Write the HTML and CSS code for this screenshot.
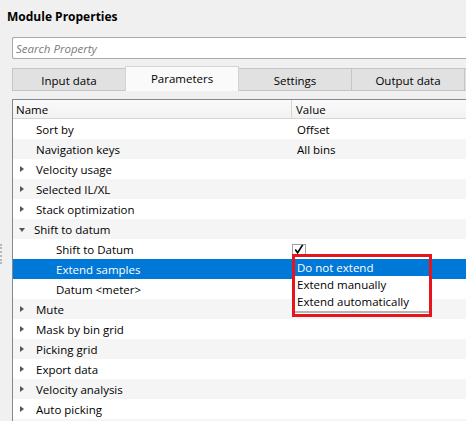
FILE: index.html
```html
<!DOCTYPE html>
<html>
<head>
<meta charset="utf-8">
<link rel="stylesheet" href="styles.css">
</head>
<body>
<div class="title">Module Properties</div>
<div class="search"><span class="placeholder">Search Property</span></div>
<div class="tabs">
  <div class="tab">Input data</div>
  <div class="tab active">Parameters</div>
  <div class="tab">Settings</div>
  <div class="tab">Output data</div>
  <div class="tab"></div>
</div>
<div class="main">
  <div class="gutter"><div class="grip"></div></div>
  <div class="table">
    <div class="head">
      <div class="hcell">Name</div>
      <div class="hcell hval">Value</div>
    </div>
    <div class="row"><div class="name l1">Sort by</div><div class="value">Offset</div></div>
    <div class="row alt"><div class="name l1">Navigation keys</div><div class="value">All bins</div></div>
    <div class="row"><div class="name l0"><span class="arrow"></span>Velocity usage</div><div class="value"></div></div>
    <div class="row alt"><div class="name l0"><span class="arrow"></span>Selected IL/XL</div><div class="value"></div></div>
    <div class="row"><div class="name l0"><span class="arrow"></span>Stack optimization</div><div class="value"></div></div>
    <div class="row alt"><div class="name l0"><span class="arrow open"></span>Shift to datum</div><div class="value"></div></div>
    <div class="row"><div class="name l2">Shift to Datum</div><div class="value"><span class="check"><svg width="13" height="13" viewBox="0 0 13 13"><path d="M2.5 6.5 L5 10 L10.5 1.5" fill="none" stroke="#000" stroke-width="1.8"/></svg></span></div></div>
    <div class="row sel"><div class="name l2">Extend samples</div><div class="value"></div></div>
    <div class="row"><div class="name l2">Datum &lt;meter&gt;</div><div class="value"></div></div>
    <div class="row alt"><div class="name l0"><span class="arrow"></span>Mute</div><div class="value"></div></div>
    <div class="row"><div class="name l0"><span class="arrow"></span>Mask by bin grid</div><div class="value"></div></div>
    <div class="row alt"><div class="name l0"><span class="arrow"></span>Picking grid</div><div class="value"></div></div>
    <div class="row"><div class="name l0"><span class="arrow"></span>Export data</div><div class="value"></div></div>
    <div class="row alt"><div class="name l0"><span class="arrow"></span>Velocity analysis</div><div class="value"></div></div>
    <div class="row"><div class="name l0"><span class="arrow"></span>Auto picking</div><div class="value"></div></div>
    <div class="row alt short"><div class="name l0"></div><div class="value"></div></div>
  </div>
</div>
<div class="dropdown">
  <div class="list">
    <div class="item hl">Do not extend</div>
    <div class="item">Extend manually</div>
    <div class="item">Extend automatically</div>
  </div>
</div>
</body>
</html>
```
FILE: styles.css
```css
html, body {
  margin: 0;
  padding: 0;
  overflow: hidden;
}
body {
  width: 466px;
  height: 421px;
  background: #f0f0f0;
  font-family: "Open Sans", "Noto Sans", sans-serif;
  font-size: 11.5px;
  color: #000;
  position: relative;
}
.title {
  height: 37px;
  box-sizing: border-box;
  padding: 7px 0 0 7px;
  line-height: 20px;
  font-weight: bold;
  font-size: 12px;
}
.search {
  margin-left: 12px;
  width: 454px;
  height: 22px;
  box-sizing: border-box;
  border: 1px solid #a9a9a9;
  border-right: none;
  border-radius: 2px 0 0 2px;
  background: #fff;
  padding-left: 3px;
  line-height: 21px;
}
.placeholder {
  font-style: italic;
  color: #7b7b7b;
}
.tabs {
  margin-top: 7px;
  margin-left: 12px;
  height: 25px;
  display: flex;
  align-items: flex-end;
  width: 454px;
  overflow: hidden;
}
.tab {
  width: 114px;
  height: 23px;
  box-sizing: border-box;
  border: 1px solid #c5c5c5;
  background: #e1e1e1;
  text-align: center;
  line-height: 23px;
  margin-right: -1px;
  flex: none;
}
.tab.active {
  height: 25px;
  background: #fafafa;
  border-color: #d3d3d3;
  border-bottom: none;
  line-height: 23px;
  position: relative;
  z-index: 1;
}
.main {
  margin-top: 8px;
  display: flex;
}
.gutter {
  width: 12px;
  flex: none;
  display: flex;
  align-items: center;
}
.grip {
  width: 2px;
  height: 20px;
  margin-bottom: 12px;
  border-left: 2px dotted #b8b8b8;
}
.table {
  width: 454px;
  flex: none;
  box-sizing: border-box;
  border-top: 1px solid #828790;
  border-left: 1px solid #828790;
  background: #fff;
}
.head {
  display: grid;
  grid-template-columns: 278px 1fr;
  height: 19px;
  box-sizing: border-box;
  border-bottom: 1px solid #d5d5d5;
  background: linear-gradient(#fafafa, #f2f2f2);
}
.hcell {
  line-height: 19px;
  padding-left: 3px;
}
.hval {
  border-left: 1px solid #d5d5d5;
  padding-left: 4px;
}
.row {
  display: grid;
  grid-template-columns: 278px 1fr;
  height: 20px;
  background: #fff;
}
.row.short {
  height: 2px;
}
.row.alt {
  background: #f5f5f5;
}
.row.sel {
  background: #0078d7;
  color: #fff;
}
.name {
  display: flex;
  align-items: center;
  white-space: nowrap;
  padding-top: 1px;
}
.name.l0 { padding-left: 7px; }
.name.l1 { padding-left: 23px; }
.name.l2 { padding-left: 43px; }
.arrow {
  width: 0;
  height: 0;
  border-left: 4px solid #555;
  border-top: 3.5px solid transparent;
  border-bottom: 3.5px solid transparent;
  margin-right: 12px;
  margin-top: -1px;
}
.arrow.open {
  border-left: 3.5px solid transparent;
  border-right: 3.5px solid transparent;
  border-top: 4px solid #555;
  border-bottom: none;
  margin-right: 9px;
  margin-left: -1px;
  margin-top: 0;
}
.value {
  padding-left: 6px;
  padding-top: 1px;
  display: flex;
  align-items: center;
}
.check {
  margin-left: -5px;
  width: 14px;
  height: 14px;
  box-sizing: border-box;
  border: 1px solid #a0a0a0;
  background: #fff;
  display: flex;
  align-items: center;
  justify-content: center;
  margin-top: 3px;
}
.check svg {
  display: block;
  margin-top: -3px;
}
.dropdown {
  position: absolute;
  left: 292px;
  top: 254px;
  width: 140px;
  height: 63px;
  box-sizing: border-box;
  border: 3px solid #e8141c;
  background: #fff;
  padding-top: 2px;
}
.list {
  height: 52px;
  border-bottom: 2px solid #b4b4b4;
}
.item {
  height: 17px;
  line-height: 18px;
  padding-left: 2px;
  white-space: nowrap;
}
.item.hl {
  background: #0078d7;
  color: #fff;
}
```
